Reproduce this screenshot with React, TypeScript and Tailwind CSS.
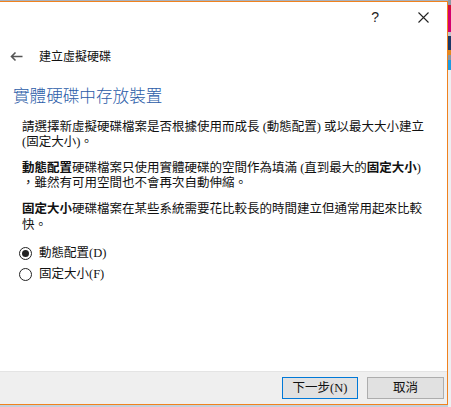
export default function App() {
  const body = 'font-["Liberation_Serif","Noto_Sans_CJK_TC",serif]';
  return (
    <div className="w-[451px] h-[407px] flex bg-[#c9d3de] overflow-hidden">
      <div className="w-[448px] flex flex-col">
        <div className="h-[1px] bg-[#a8b2bf]" />
        <div className="h-[404px] flex flex-col bg-white border border-l-0 border-[#f0821e] text-[#111]">
          {/* title bar */}
          <div className="h-[30px] flex items-center justify-end pr-[18px] gap-[39px]">
            <span className='text-[14px] leading-none font-["Liberation_Sans",sans-serif] text-[#222]'>?</span>
            <svg width="11" height="11" viewBox="0 0 11 11" className="text-[#222]">
              <path d="M0.5 0.5 L10.5 10.5 M10.5 0.5 L0.5 10.5" stroke="currentColor" strokeWidth="1.1" fill="none" />
            </svg>
          </div>

          {/* back + title */}
          <div className="mt-[14px] h-[20px] flex items-center pl-[10px]">
            <svg width="13" height="11" viewBox="0 0 13 11" className="text-[#555]">
              <path d="M12.5 5.5 H1.5 M5.5 1.5 L1.5 5.5 L5.5 9.5" stroke="currentColor" strokeWidth="1.6" fill="none" />
            </svg>
            <span className='ml-[16px] text-[12px] font-["Noto_Sans_CJK_TC",sans-serif]'>建立虛擬硬碟</span>
          </div>

          <h1 className='mt-[17px] pl-[13px] h-[24px] leading-[24px] text-[16.6px] text-[#2b5ca8] font-["Noto_Sans_CJK_TC",sans-serif] font-light'>
            實體硬碟中存放裝置
          </h1>

          <div className={`pl-[22px] text-[12.5px] leading-[15px] whitespace-nowrap ${body}`}>
            <p className="mt-[13px]">
              請選擇新虛擬硬碟檔案是否根據使用而成長 (動態配置) 或以最大大小建立
              <br />
              (固定大小)。
            </p>
            <p className="mt-[11px]">
              <b>動態配置</b>硬碟檔案只使用實體硬碟的空間作為填滿 (直到最大的<b>固定大小</b>)
              <br />
              ，雖然有可用空間也不會再次自動伸縮。
            </p>
            <p className="mt-[10px] leading-[16px]">
              <b>固定大小</b>硬碟檔案在某些系統需要花比較長的時間建立但通常用起來比較
              <br />
              快。
            </p>

            <div className="mt-[10px] flex flex-col">
              <label className="h-[21px] flex items-center">
                <span className="w-[13px] h-[13px] ml-[-3px] rounded-full border-[1.5px] border-[#222] flex items-center justify-center">
                  <span className="w-[7px] h-[7px] rounded-full bg-[#222]" />
                </span>
                <span className="ml-[7px]">動態配置(D)</span>
              </label>
              <label className="h-[21px] flex items-center">
                <span className="w-[13px] h-[13px] ml-[-3px] rounded-full border-[1.5px] border-[#222]" />
                <span className="ml-[7px]">固定大小(F)</span>
              </label>
            </div>
          </div>

          <div className="flex-1" />

          {/* footer */}
          <div className='h-[33px] bg-[#efefef] border-t border-[#e4e4e4] flex items-center justify-end gap-[9px] pr-[3px] font-["Liberation_Serif","Noto_Sans_CJK_TC",serif] text-[12.5px]'>
            <button className="w-[76px] h-[22px] bg-[#e1e1e1] border border-[#0078d7]">下一步(N)</button>
            <button className="w-[77px] h-[22px] bg-[#e1e1e1] border border-[#adadad]">取消</button>
          </div>
        </div>
        <div className="flex-1 bg-[#c4d0dc]" />
      </div>
      <div className="flex-1 flex flex-col">
        <div className="h-[5px] bg-[#8f99a6]" />
        <div className="h-[5px] bg-[#d0103a]" />
        <div className="h-[22px] bg-[#d4006e]" />
        <div className="h-[4px] bg-[#c0c4cc]" />
        <div className="h-[14px] bg-[#1b3766]" />
        <div className="h-[5px] bg-[#e08a20]" />
        <div className="h-[5px] bg-[#8a94a0]" />
        <div className="h-[10px] bg-[#1e9be0]" />
        <div className="flex-1 bg-[#eef0f2]" />
      </div>
    </div>
  );
}
